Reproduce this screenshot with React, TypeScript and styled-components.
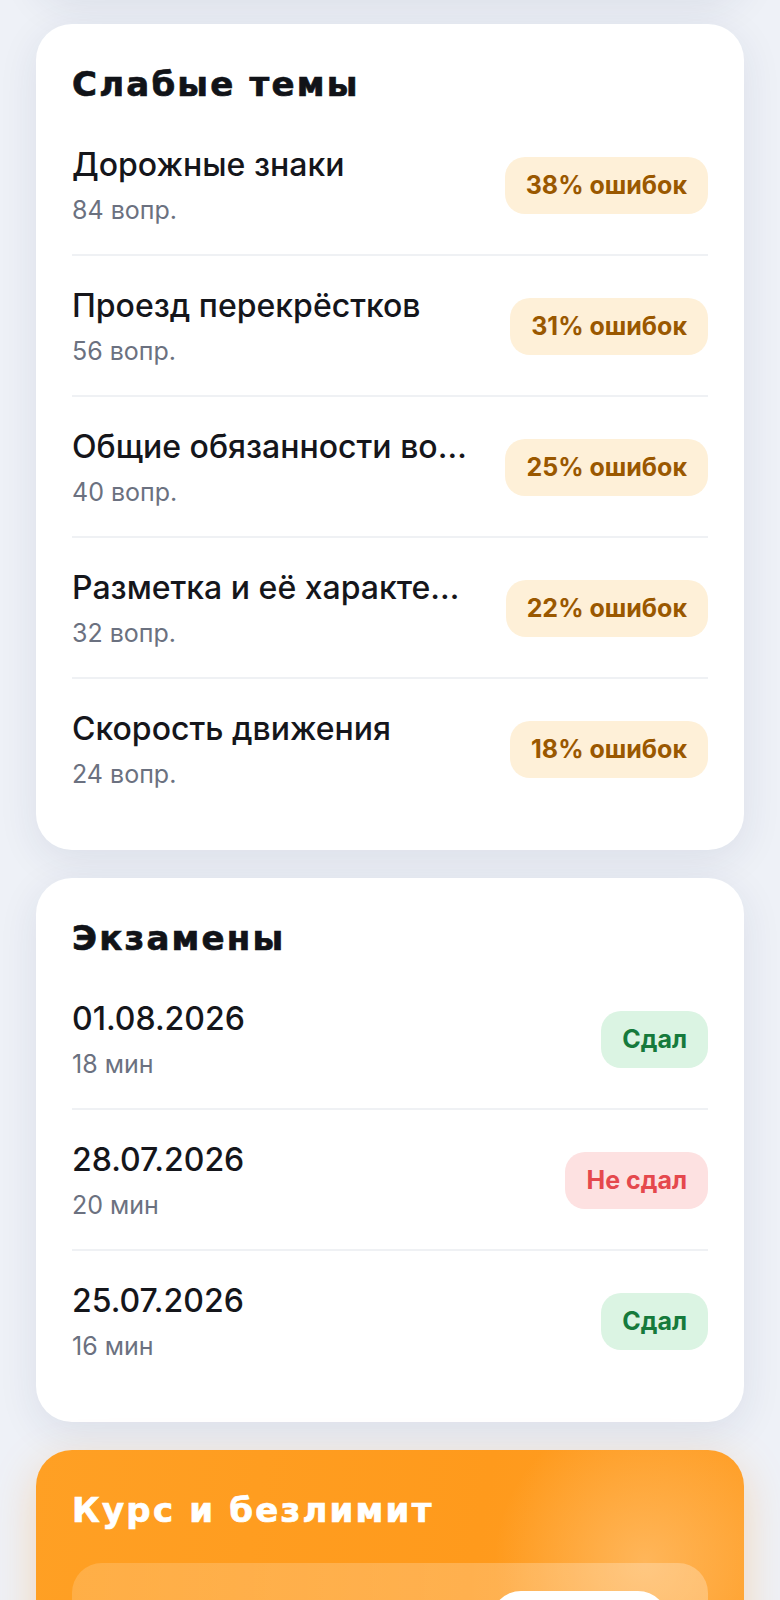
import React from "react";
import styled, { createGlobalStyle } from "styled-components";

const GlobalStyle = createGlobalStyle`
  html, body {
    margin: 0;
    padding: 0;
    background: #eef1f7;
  }
  body {
    font-family: Inter, "Noto Sans", sans-serif;
    -webkit-font-smoothing: antialiased;
    color: #14161b;
  }
  * { box-sizing: border-box; }
`;

const Page = styled.main`
  display: flex;
  flex-direction: column;
  gap: 28px;
  padding: 0 36px 80px;
`;

const Card = styled.section`
  background: #ffffff;
  border-radius: 36px;
  padding: 40px 36px 32px;
  box-shadow: 0 10px 40px rgba(34, 44, 86, 0.09);
`;

const PrevCard = styled(Card)`
  height: 200px;
  margin-top: -204px;
`;

const CardTitle = styled.h2<{ $light?: boolean }>`
  margin: 0 0 11px;
  font-family: "DejaVu Sans", Inter, sans-serif;
  font-weight: 700;
  font-size: 34px;
  line-height: 40px;
  letter-spacing: 2.2px;
  color: ${(p) => (p.$light ? "#ffffff" : "#111318")};
  -webkit-text-stroke: 0.7px currentColor;
`;

const List = styled.div`
  display: flex;
  flex-direction: column;
`;

const Row = styled.div`
  display: flex;
  align-items: center;
  justify-content: space-between;
  gap: 28px;
  padding: 30px 0 29px;

  & + & {
    border-top: 2px solid #eff1f4;
  }
`;

const RowText = styled.div`
  display: flex;
  flex-direction: column;
  gap: 10px;
  flex: 1;
  min-width: 0;
`;

const RowTitle = styled.div`
  font-size: 32px;
  line-height: 40px;
  font-weight: 500;
  color: #15161b;
  white-space: nowrap;
  overflow: hidden;
  text-overflow: ellipsis;
`;

const RowSub = styled.div`
  font-size: 25px;
  line-height: 30px;
  font-weight: 400;
  color: #6b7180;
`;

type Tone = "warn" | "ok" | "fail";

const toneColors: Record<Tone, { bg: string; fg: string }> = {
  warn: { bg: "#fef0d8", fg: "#9a5800" },
  ok: { bg: "#dbf4e3", fg: "#167a3c" },
  fail: { bg: "#fde1e1", fg: "#e5484d" },
};

const Badge = styled.span<{ $tone: Tone }>`
  flex: none;
  display: inline-flex;
  align-items: center;
  justify-content: center;
  height: 57px;
  padding: 0 21px;
  border-radius: 20px;
  font-size: 25px;
  font-weight: 700;
  background: ${(p) => toneColors[p.$tone].bg};
  color: ${(p) => toneColors[p.$tone].fg};
`;

const PromoCard = styled.section`
  border-radius: 36px;
  padding: 40px 36px 36px;
  background:
    radial-gradient(circle at 86% 36%, rgba(255, 192, 112, 0.7) 0, rgba(255, 186, 100, 0) 150px),
    linear-gradient(100deg, #ffa024 0%, #ff9a1c 60%, #ff9f28 100%);
  box-shadow: 0 14px 44px rgba(255, 146, 30, 0.28);
`;

const PromoPanel = styled.div`
  margin-top: 33px;
  display: flex;
  flex-direction: column;
  gap: 16px;
  padding: 28px 40px 28px 28px;
  border-radius: 30px;
  background: linear-gradient(90deg, rgba(255, 255, 255, 0.16), rgba(255, 255, 255, 0.26));
`;

const PromoTop = styled.div`
  display: flex;
  align-items: center;
  justify-content: space-between;
  gap: 20px;
`;

const PromoHeading = styled.div`
  font-size: 26px;
  line-height: 32px;
  font-weight: 700;
  color: #ffffff;
`;

const PromoNote = styled.div`
  font-size: 22px;
  line-height: 28px;
  color: rgba(255, 255, 255, 0.9);
`;

const PromoButton = styled.button`
  flex: none;
  width: 177px;
  height: 60px;
  border: none;
  border-radius: 30px;
  background: #ffffff;
  color: #f28a00;
  font-family: Inter, sans-serif;
  font-size: 24px;
  font-weight: 700;
`;

const topics = [
  { name: "Дорожные знаки", count: 84, pct: 38 },
  { name: "Проезд перекрёстков", count: 56, pct: 31 },
  { name: "Общие обязанности водителей", count: 40, pct: 25 },
  { name: "Разметка и её характеристики", count: 32, pct: 22 },
  { name: "Скорость движения", count: 24, pct: 18 },
];

const exams: { date: string; mins: number; passed: boolean }[] = [
  { date: "01.08.2026", mins: 18, passed: true },
  { date: "28.07.2026", mins: 20, passed: false },
  { date: "25.07.2026", mins: 16, passed: true },
];

export default function App() {
  return (
    <>
      <GlobalStyle />
      <Page>
        <PrevCard aria-hidden />
        <Card>
          <CardTitle>Слабые темы</CardTitle>
          <List>
            {topics.map((t) => (
              <Row key={t.name}>
                <RowText>
                  <RowTitle title={t.name}>{t.name}</RowTitle>
                  <RowSub>{t.count} вопр.</RowSub>
                </RowText>
                <Badge $tone="warn">{t.pct}% ошибок</Badge>
              </Row>
            ))}
          </List>
        </Card>

        <Card>
          <CardTitle>Экзамены</CardTitle>
          <List>
            {exams.map((e) => (
              <Row key={e.date}>
                <RowText>
                  <RowTitle>{e.date}</RowTitle>
                  <RowSub>{e.mins} мин</RowSub>
                </RowText>
                <Badge $tone={e.passed ? "ok" : "fail"}>
                  {e.passed ? "Сдал" : "Не сдал"}
                </Badge>
              </Row>
            ))}
          </List>
        </Card>

        <PromoCard>
          <CardTitle $light>Курс и безлимит</CardTitle>
          <PromoPanel>
            <PromoTop>
              <PromoHeading>Полный курс ПДД</PromoHeading>
              <PromoButton>Открыть</PromoButton>
            </PromoTop>
            <PromoNote>Безлимит на все билеты</PromoNote>
          </PromoPanel>
        </PromoCard>
      </Page>
    </>
  );
}
